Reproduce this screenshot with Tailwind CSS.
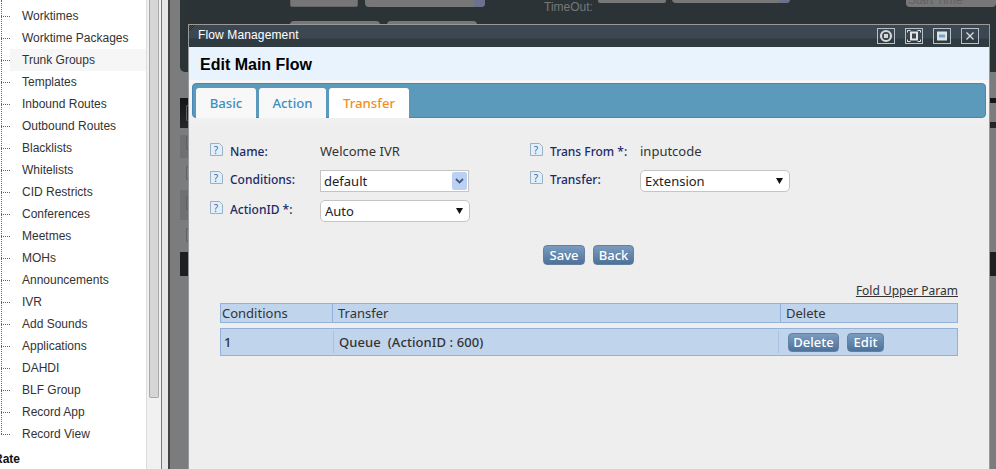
<!DOCTYPE html>
<html lang="en">
<head>
  <meta charset="UTF-8">
  <title>Flow Management</title>
  <script src="https://cdn.jsdelivr.net/npm/@tailwindcss/browser@4"></script>
</head>
<body class="w-[996px] h-[469px] overflow-hidden relative flex bg-white font-['Liberation_Sans',sans-serif]">

  <!-- Tree menu -->
  <aside class="w-[146px] h-[469px] shrink-0 bg-white relative overflow-hidden text-[12px] text-[#333]">
    <div class="absolute left-[1px] top-0 h-[434px] border-l border-dotted border-[#666]"></div>
    <ul class="pt-[5px]">
      <li class="h-[22px] flex items-center"><span class="w-[9px] ml-[1px] border-t border-dotted border-[#666]"></span><span class="pl-[12px]">Worktimes</span></li>
      <li class="h-[22px] flex items-center"><span class="w-[9px] ml-[1px] border-t border-dotted border-[#666]"></span><span class="pl-[12px]">Worktime Packages</span></li>
      <li class="h-[22px] flex items-center"><span class="w-[9px] ml-[1px] border-t border-dotted border-[#666]"></span><span class="pl-[12px] bg-[#f6f6f6] flex-1 leading-[22px]">Trunk Groups</span></li>
      <li class="h-[22px] flex items-center"><span class="w-[9px] ml-[1px] border-t border-dotted border-[#666]"></span><span class="pl-[12px]">Templates</span></li>
      <li class="h-[22px] flex items-center"><span class="w-[9px] ml-[1px] border-t border-dotted border-[#666]"></span><span class="pl-[12px]">Inbound Routes</span></li>
      <li class="h-[22px] flex items-center"><span class="w-[9px] ml-[1px] border-t border-dotted border-[#666]"></span><span class="pl-[12px]">Outbound Routes</span></li>
      <li class="h-[22px] flex items-center"><span class="w-[9px] ml-[1px] border-t border-dotted border-[#666]"></span><span class="pl-[12px]">Blacklists</span></li>
      <li class="h-[22px] flex items-center"><span class="w-[9px] ml-[1px] border-t border-dotted border-[#666]"></span><span class="pl-[12px]">Whitelists</span></li>
      <li class="h-[22px] flex items-center"><span class="w-[9px] ml-[1px] border-t border-dotted border-[#666]"></span><span class="pl-[12px]">CID Restricts</span></li>
      <li class="h-[22px] flex items-center"><span class="w-[9px] ml-[1px] border-t border-dotted border-[#666]"></span><span class="pl-[12px]">Conferences</span></li>
      <li class="h-[22px] flex items-center"><span class="w-[9px] ml-[1px] border-t border-dotted border-[#666]"></span><span class="pl-[12px]">Meetmes</span></li>
      <li class="h-[22px] flex items-center"><span class="w-[9px] ml-[1px] border-t border-dotted border-[#666]"></span><span class="pl-[12px]">MOHs</span></li>
      <li class="h-[22px] flex items-center"><span class="w-[9px] ml-[1px] border-t border-dotted border-[#666]"></span><span class="pl-[12px]">Announcements</span></li>
      <li class="h-[22px] flex items-center"><span class="w-[9px] ml-[1px] border-t border-dotted border-[#666]"></span><span class="pl-[12px]">IVR</span></li>
      <li class="h-[22px] flex items-center"><span class="w-[9px] ml-[1px] border-t border-dotted border-[#666]"></span><span class="pl-[12px]">Add Sounds</span></li>
      <li class="h-[22px] flex items-center"><span class="w-[9px] ml-[1px] border-t border-dotted border-[#666]"></span><span class="pl-[12px]">Applications</span></li>
      <li class="h-[22px] flex items-center"><span class="w-[9px] ml-[1px] border-t border-dotted border-[#666]"></span><span class="pl-[12px]">DAHDI</span></li>
      <li class="h-[22px] flex items-center"><span class="w-[9px] ml-[1px] border-t border-dotted border-[#666]"></span><span class="pl-[12px]">BLF Group</span></li>
      <li class="h-[22px] flex items-center"><span class="w-[9px] ml-[1px] border-t border-dotted border-[#666]"></span><span class="pl-[12px]">Record App</span></li>
      <li class="h-[22px] flex items-center"><span class="w-[9px] ml-[1px] border-t border-dotted border-[#666]"></span><span class="pl-[12px]">Record View</span></li>
    </ul>
    <div class="mt-[3px] ml-[-6px] text-[12px] font-bold text-[#111] leading-[22px]">Rate</div>
  </aside>

  <!-- Scrollbar -->
  <div class="w-[15px] h-full shrink-0 bg-[#f1f1f1] border-l border-[#dddddd] pl-[2px]">
    <div class="w-[10px] h-[398px] bg-[#d6d6d6] border border-t-0 border-[#a8a8a8] rounded-b-[2px]"></div>
  </div>
  <div class="w-[1px] h-full shrink-0 bg-[#777]"></div>
  <div class="w-[6px] h-full shrink-0 bg-[#e6e6e6]"></div>
  <div class="w-[2px] h-full shrink-0 bg-[#444]"></div>

  <!-- Dimmed page behind the dialog -->
  <main class="flex-1 h-full bg-[#7a7c7d] relative overflow-hidden">
    <div class="ml-[10px] h-[72px] bg-[#2b3337] rounded-bl-[5px] relative text-[#777]">
      <div class="absolute left-[110px] top-[-5px] w-[68px] h-[12px] bg-[#777] border border-[#666] rounded-[2px]"></div>
      <div class="absolute left-[185px] top-[-5px] w-[120px] h-[12px] bg-[#777] rounded-[4px] overflow-hidden"><div class="ml-auto w-[11px] h-full bg-[#6a7290]"></div></div>
      <div class="absolute left-[110px] top-[21px] w-[90px] h-[8px] bg-[#777] rounded-t-[4px]"></div>
      <div class="absolute left-[207px] top-[21px] w-[90px] h-[8px] bg-[#777] rounded-t-[4px]"></div>
      <div class="absolute left-[364px] top-[0px] text-[12px] leading-[14px]">TimeOut:</div>
      <div class="absolute left-[418px] top-[-5px] w-[68px] h-[8px] bg-[#777] rounded-[2px]"></div>
      <div class="absolute left-[492px] top-[-5px] w-[118px] h-[8px] bg-[#777] rounded-[4px] overflow-hidden"><div class="ml-auto w-[11px] h-full bg-[#6a7290]"></div></div>
      <div class="absolute left-[726px] top-[-5px] w-[90px] h-[12px] bg-[#777] rounded-[4px] text-[12px] leading-[10px] pl-[2px] text-[#606468]">Start Time</div>
    </div>
    <div class="h-[26px]"></div>
    <div class="ml-[10px] h-[30px] bg-[linear-gradient(#141516,#26282a)] relative">
      <div class="absolute right-0 top-[5px] w-[7px] h-[19px] bg-[#7a7c7d]"></div>
    </div>
    <div class="h-[7px]"></div>
    <div class="ml-[10px] w-[9px] h-[23px] bg-[#6e7071]"></div>
    <div class="h-[32px]"></div>
    <div class="ml-[10px] w-[9px] h-[30px] bg-[#6e7071]"></div>
    <div class="h-[32px]"></div>
    <div class="ml-[10px] h-[24px] bg-[#1d1f20]"></div>
    <!-- edges of the fields hidden behind the dialog -->
    <div class="absolute left-[16px] top-[105px] w-[3px] h-[16px] border border-r-0 border-[#5f6162] rounded-l-[2px]"></div>
    <div class="absolute left-[16px] top-[136px] w-[3px] h-[14px] border border-r-0 border-[#5f6162] rounded-l-[2px]"></div>
    <div class="absolute left-[16px] top-[166px] w-[3px] h-[14px] border border-r-0 border-[#5f6162] rounded-l-[2px]"></div>
    <div class="absolute left-[16px] top-[196px] w-[3px] h-[14px] border border-r-0 border-[#5f6162] rounded-l-[2px]"></div>
    <div class="absolute left-[16px] top-[228px] w-[3px] h-[14px] border border-r-0 border-[#5f6162] rounded-l-[2px]"></div>
  </main>

  <!-- Dialog -->
  <section class="absolute left-[188px] top-[24px] w-[802px] h-[460px] bg-[#eeeeee] border-l border-t border-r border-[#999] font-['Noto_Sans',sans-serif]">
    <svg class="absolute left-0 top-0 z-10" width="7" height="7" viewBox="0 0 7 7"><path d="M0 0h7L0 7z" fill="#555"/><path d="M0 4L4 0M0 2L2 0M0 6L6 0" stroke="#222" stroke-width="1"/></svg>

    <header class="h-[22px] bg-[linear-gradient(#3b4851_0,#3b4851_13px,#2f3b41_14px,#2f3b41_100%)] flex items-center justify-between pl-[9px] pr-[10px]">
      <span class="text-white text-[12px] tracking-[0.13px] mb-[2px] font-['Liberation_Sans',sans-serif]">Flow Management</span>
      <div class="flex gap-[10px]">
        <button class="w-[18px] h-[16px] border border-[#b4c0cc] flex items-center justify-center">
          <svg width="16" height="14" viewBox="0 0 16 14"><circle cx="8" cy="7" r="5" fill="none" stroke="#d6d6d6" stroke-width="2.2"/><rect x="6" y="5" width="4" height="4" fill="#d6d6d6"/></svg>
        </button>
        <button class="w-[18px] h-[16px] border border-[#b4c0cc] flex items-center justify-center">
          <svg width="16" height="14" viewBox="0 0 16 14"><rect x="5" y="3.5" width="6" height="7" fill="none" stroke="#e4e4e4" stroke-width="2"/><path d="M1.5 3.5v-2h3M14.500 3.500v-2h-3M1.500 10.500v2h3M14.500 10.500v2h-3" fill="none" stroke="#e4e4e4" stroke-width="1"/></svg>
        </button>
        <button class="w-[18px] h-[16px] border border-[#b4c0cc] flex items-center justify-center">
          <svg width="12" height="10" viewBox="0 0 12 10"><rect x="1" y="0.500" width="10" height="9" fill="#dfe3e6"/><rect x="3" y="3.500" width="6" height="3" fill="#6fa8d8"/></svg>
        </button>
        <button class="w-[18px] h-[16px] border border-[#b4c0cc] flex items-center justify-center">
          <svg width="10" height="10" viewBox="0 0 10 10"><path d="M1.5 1.5l7 7M8.5 1.5l-7 7" stroke="#d8dde2" stroke-width="1.3"/></svg>
        </button>
      </div>
    </header>

    <div class="h-[33px] bg-[#e8f3fe] pl-[11px] pt-[3px] flex items-center">
      <h1 class="text-[16px] font-bold text-black font-['Liberation_Sans',sans-serif]">Edit Main Flow</h1>
    </div>

    <div class="bg-[linear-gradient(#f7f7f7,#eeeeee)] h-[50px] pt-[3px] pl-[3px]">
      <nav class="w-[794px] h-[35px] bg-[#5b9aba] border border-[#4a86b8] rounded-[4px] pl-[3px] pt-[4px] flex gap-[3px] text-[13.2px] font-medium">
        <a class="w-[60px] h-[30px] pt-[2px] bg-[#f8f8f8] rounded-t-[3px] flex items-center justify-center text-[#3d8fc0]">Basic</a>
        <a class="w-[67px] h-[30px] pt-[2px] bg-[#f8f8f8] rounded-t-[3px] flex items-center justify-center text-[#3d8fc0]">Action</a>
        <a class="w-[80px] h-[30px] pt-[2px] bg-white rounded-t-[3px] flex items-center justify-center text-[#f0901e]">Transfer</a>
      </nav>
    </div>

    <!-- Form -->
    <div class="grid grid-cols-[320px_1fr] pl-[21px] pt-[11px] text-[12px]">
      <div class="flex flex-col gap-[7px]">
        <div class="h-[22px] flex items-center">
          <svg class="w-[13px] h-[13px] mr-[7px] mb-[5px]" viewBox="0 0 13 13"><path d="M.5.5h9l3 3v9H.5z" fill="#e4eef8" stroke="#9ab0c4"/><text x="6" y="10.500" font-size="10" fill="#3a6ea8" text-anchor="middle">?</text></svg>
          <span class="w-[90px] font-medium text-[#1a2a6a]">Name:</span>
          <span class="text-[13px] text-[#333]">Welcome IVR</span>
        </div>
        <div class="h-[22px] flex items-center">
          <svg class="w-[13px] h-[13px] mr-[7px] mb-[8px]" viewBox="0 0 13 13"><path d="M.5.5h9l3 3v9H.5z" fill="#e4eef8" stroke="#9ab0c4"/><text x="6" y="10.500" font-size="10" fill="#3a6ea8" text-anchor="middle">?</text></svg>
          <span class="w-[90px] font-medium text-[#1a2a6a] mb-[2px]">Conditions:</span>
          <div class="w-[149px] h-[22px] bg-white border border-[#c4c4c4] flex items-center justify-between pl-[3px] text-[13px] text-[#222]"><span class="pt-[1px]">default</span>
            <span class="w-[15px] h-[18px] mr-[1px] rounded-[2px] bg-[#bcd0f4] flex items-center justify-center"><svg width="9" height="6" viewBox="0 0 9 6"><path d="M1 1l3.5 3.500L8 1" fill="none" stroke="#445a8a" stroke-width="1.800"/></svg></span>
          </div>
        </div>
        <div class="h-[22px] mt-[1px] flex items-center">
          <svg class="w-[13px] h-[13px] mr-[7px] mb-[8px]" viewBox="0 0 13 13"><path d="M.5.5h9l3 3v9H.5z" fill="#e4eef8" stroke="#9ab0c4"/><text x="6" y="10.500" font-size="10" fill="#3a6ea8" text-anchor="middle">?</text></svg>
          <span class="w-[90px] font-medium text-[#1a2a6a] mb-[2px]">ActionID *:</span>
          <div class="w-[150px] h-[22px] bg-white border border-[#c4c4c4] rounded-[5px] flex items-center justify-between pl-[4px] pr-[6px] text-[13px] text-[#222]"><span class="pt-[1px]">Auto</span>
            <svg width="7" height="6" viewBox="0 0 7 6"><path d="M0 0h7L3.500 6z" fill="#111"/></svg>
          </div>
        </div>
      </div>
      <div class="flex flex-col gap-[7px]">
        <div class="h-[22px] flex items-center">
          <svg class="w-[13px] h-[13px] mr-[7px] mb-[5px]" viewBox="0 0 13 13"><path d="M.5.5h9l3 3v9H.5z" fill="#e4eef8" stroke="#9ab0c4"/><text x="6" y="10.500" font-size="10" fill="#3a6ea8" text-anchor="middle">?</text></svg>
          <span class="w-[90px] font-medium text-[#1a2a6a]">Trans From *:</span>
          <span class="text-[13px] text-[#333]">inputcode</span>
        </div>
        <div class="h-[22px] flex items-center">
          <svg class="w-[13px] h-[13px] mr-[7px] mb-[8px]" viewBox="0 0 13 13"><path d="M.5.5h9l3 3v9H.5z" fill="#e4eef8" stroke="#9ab0c4"/><text x="6" y="10.500" font-size="10" fill="#3a6ea8" text-anchor="middle">?</text></svg>
          <span class="w-[90px] font-medium text-[#1a2a6a] mb-[2px]">Transfer:</span>
          <div class="w-[150px] h-[22px] bg-white border border-[#c4c4c4] rounded-[5px] flex items-center justify-between pl-[4px] pr-[6px] text-[13px] text-[#222]"><span class="pt-[1px]">Extension</span>
            <svg width="7" height="6" viewBox="0 0 7 6"><path d="M0 0h7L3.500 6z" fill="#111"/></svg>
          </div>
        </div>
      </div>
    </div>

    <div class="flex justify-center gap-[8px] mt-[23px] pr-[1px]">
      <button class="w-[42px] h-[20px] rounded-[4px] border border-[#667f9c] bg-[linear-gradient(#7b9cc0,#4d7199)] text-white text-[13px] font-medium leading-none">Save</button>
      <button class="w-[41px] h-[20px] rounded-[4px] border border-[#667f9c] bg-[linear-gradient(#7b9cc0,#4d7199)] text-white text-[13px] font-medium leading-none">Back</button>
    </div>

    <div class="mx-[31px] mt-[17px] text-right text-[12px] leading-[18px] text-[#333]"><a class="underline">Fold Upper Param</a></div>

    <!-- Transfer table -->
    <div class="mx-[31px] mt-[3px] w-[738px] text-[13px] text-[#333]">
      <div class="h-[20px] bg-[#c0d4ec] border border-[#92b2dc] flex">
        <span class="w-[112px] pl-[1px] border-r border-[#92b2dc] leading-[19px]">Conditions</span>
        <span class="w-[448px] pl-[5px] border-r border-[#92b2dc] leading-[19px]">Transfer</span>
        <span class="pl-[5px] leading-[19px]">Delete</span>
      </div>
      <div class="h-[28px] mt-[5px] bg-[#c0d4ec] border border-[#92b2dc] flex items-center">
        <span class="w-[113px] pl-[3px] border-r border-[#a8c2e4] leading-[22px] font-medium">1</span>
        <span class="w-[445px] pl-[5px] border-r border-[#a8c2e4] leading-[22px] font-medium tracking-[0.08px] whitespace-pre">Queue  (ActionID : 600)</span>
        <div class="flex gap-[8px] pl-[9px]">
          <button class="w-[51px] h-[19px] rounded-[4px] border border-[#667f9c] bg-[linear-gradient(#7b9cc0,#4d7199)] text-white text-[13px] font-medium leading-none">Delete</button>
          <button class="w-[37px] h-[19px] rounded-[4px] border border-[#667f9c] bg-[linear-gradient(#7b9cc0,#4d7199)] text-white text-[13px] font-medium leading-none">Edit</button>
        </div>
      </div>
    </div>
  </section>
</body>
</html>
